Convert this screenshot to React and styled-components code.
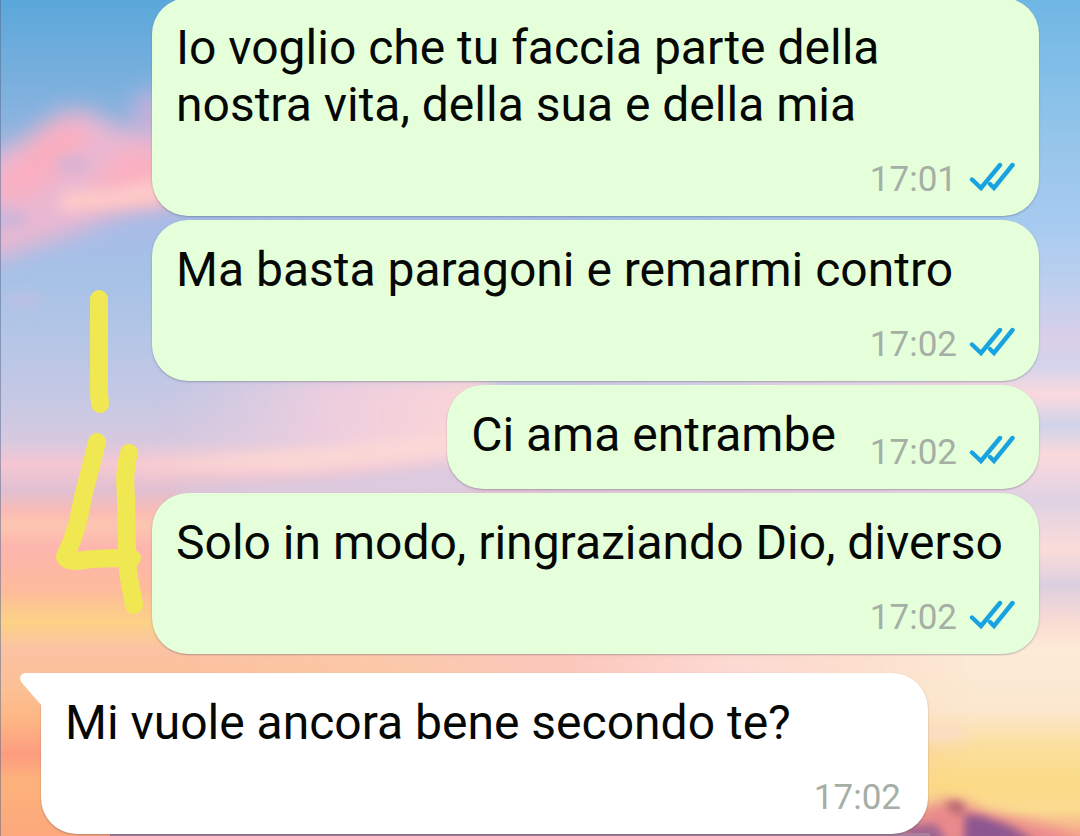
import React from "react";
import styled, { createGlobalStyle } from "styled-components";

const GlobalStyle = createGlobalStyle`
  * { box-sizing: border-box; }
  body { margin: 0; font-family: Roboto, "Noto Sans", sans-serif; }
`;

const Screen = styled.main`
  position: relative;
  height: 100vh;
  overflow: hidden;
  display: flex;
  flex-direction: column;
  justify-content: flex-end;
`;

const Sky = styled.svg`
  position: absolute;
  inset: 0;
  width: 100%;
  height: 100%;
`;

const Scribble = styled.svg`
  position: absolute;
  left: 50px;
  top: 285px;
  pointer-events: none;
`;

const Thread = styled.ol`
  position: relative;
  flex: none;
  list-style: none;
  margin: 0;
  padding: 0 41px 2px;
  display: flex;
  flex-direction: column;
  gap: 4px;
`;

const Bubble = styled.li`
  position: relative;
  display: flex;
  flex-direction: ${(p) => (p.$compact ? "row" : "column")};
  align-items: ${(p) => (p.$compact ? "flex-end" : "stretch")};
  align-self: ${(p) => (p.$incoming ? "flex-start" : "flex-end")};
  gap: ${(p) => (p.$compact ? "34px" : "26px")};
  width: ${(p) => (p.$compact ? "auto" : "calc(100% - 111px)")};
  margin-top: ${(p) => (p.$incoming ? "15px" : "0")};
  padding: 21px 24px 15px;
  border-radius: ${(p) => (p.$incoming ? "0 36px 36px 36px" : "36px")};
  background: ${(p) => (p.$incoming ? "#ffffff" : "#e5ffdb")};
  box-shadow: 0 1px 2px rgba(60, 60, 90, 0.35);
`;

const Message = styled.p`
  margin: 0;
  padding-bottom: ${(p) => (p.$compact ? "11px" : "0")};
  font-size: 48px;
  line-height: 57px;
  color: #050805;
`;

const Meta = styled.div`
  display: flex;
  justify-content: flex-end;
  align-items: center;
  padding-right: ${(p) => (p.$incoming ? "3px" : "0")};
  gap: 12px;
`;

const Time = styled.time`
  font-size: 35px;
  line-height: 42px;
  min-width: 87px;
  color: #a6afa5;
`;

const Tail = styled.svg`
  position: absolute;
  left: -21px;
  top: 0;
`;

function Ticks() {
  return (
    <svg width="46" height="38" viewBox="0 0 46 38" fill="none" stroke="#18a3e0" strokeWidth="4.4" role="img" aria-label="Letto">
      <path d="M3 18.5 L12 27 L31 4" strokeLinecap="round" />
      <path d="M21 23 L25 27 L43.5 4" strokeLinecap="round" />
    </svg>
  );
}

const leftSky = [
  [0, "#5aa7da"], [60, "#72aedd"], [110, "#85b2de"], [170, "#a2b8e0"], [230, "#a6bce7"],
  [280, "#a6c2e6"], [340, "#b5c6e6"], [400, "#c6c8e4"], [440, "#d6c9e0"], [465, "#f6c6d2"],
  [490, "#dfc0d2"], [512, "#fabbb4"], [525, "#fcc6b0"], [548, "#fdb5ae"], [590, "#fdbb9c"],
  [622, "#fcd286"], [650, "#fbc2a4"], [690, "#fcc094"], [720, "#fdb683"], [755, "#fd9c80"],
  [780, "#fdb27b"], [836, "#fca87c"],
];

const rightSky = [
  [0, "#70b6e4"], [80, "#84c0e8"], [150, "#98c6ea"], [230, "#a8cbf0"], [290, "#c0d0ee"],
  [340, "#dacfe8"], [365, "#d3d4ec"], [395, "#fbd9de"], [425, "#cfd3ea"], [455, "#fbd9dc"],
  [500, "#dfd2e4"], [550, "#fbdcd8"], [585, "#dccfe0"], [625, "#fbdcd2"], [650, "#fcebd6"],
  [710, "#fbe7d0"], [745, "#fbdf9e"], [785, "#fbdb86"], [810, "#fbdb90"], [836, "#f3a08c"],
];

function Stops({ list }) {
  return list.map(([y, color]) => <stop key={y} offset={y / 836} stopColor={color} />);
}

function SunsetSky() {
  return (
    <Sky viewBox="0 0 1080 836" preserveAspectRatio="none" aria-hidden="true">
      <defs>
        <linearGradient id="skyLeft" x1="0" y1="0" x2="0" y2="1"><Stops list={leftSky} /></linearGradient>
        <linearGradient id="skyRight" x1="0" y1="0" x2="0" y2="1"><Stops list={rightSky} /></linearGradient>
        <linearGradient id="fade" x1="0" y1="0" x2="1" y2="0">
          <stop offset="0.14" stopColor="#000" />
          <stop offset="0.55" stopColor="#555" />
          <stop offset="0.9" stopColor="#fff" />
        </linearGradient>
        <linearGradient id="haze" x1="0" y1="0" x2="1" y2="0">
          <stop offset="0" stopColor="#e6cedf" stopOpacity="0" />
          <stop offset="0.5" stopColor="#f1cedd" stopOpacity="0.9" />
          <stop offset="1" stopColor="#fdd6d6" />
        </linearGradient>
        <linearGradient id="glow" x1="0" y1="0" x2="1" y2="0">
          <stop offset="0" stopColor="#fbdcd0" stopOpacity="0" />
          <stop offset="0.5" stopColor="#fbd8d4" />
          <stop offset="1" stopColor="#fdd9d6" />
        </linearGradient>
        <linearGradient id="blush" x1="0" y1="0" x2="1" y2="0">
          <stop offset="0" stopColor="#fbc4bc" stopOpacity="0" />
          <stop offset="0.3" stopColor="#fbc6bc" />
          <stop offset="0.6" stopColor="#fddad4" />
          <stop offset="1" stopColor="#fddfd4" stopOpacity="0" />
        </linearGradient>
        <mask id="toRight"><rect width="1080" height="836" fill="url(#fade)" /></mask>
        <filter id="soft" x="-50%" y="-50%" width="200%" height="200%"><feGaussianBlur stdDeviation="11" /></filter>
        <filter id="medium" x="-50%" y="-50%" width="200%" height="200%"><feGaussianBlur stdDeviation="7" /></filter>
        <filter id="crisp" x="-50%" y="-50%" width="200%" height="200%"><feGaussianBlur stdDeviation="4" /></filter>
      </defs>
      <rect width="1080" height="836" fill="url(#skyLeft)" />
      <rect width="1080" height="836" fill="url(#skyRight)" mask="url(#toRight)" />
      <g filter="url(#soft)">
        <path d="M-20 160 L20 142 L60 112 L88 110 L115 126 L170 140 L180 205 L120 215 L60 238 L-20 264 Z" fill="#e9b7d2" />
        <path d="M-10 195 L10 165 L40 135 L70 118 L92 138 L70 165 L25 200 Z" fill="#fbaebf" />
        <path d="M95 180 L122 148 L180 155 L180 195 L90 200 Z" fill="#fab0c0" />
        <path d="M130 100 L170 86 L170 140 L138 130 Z" fill="#c4b0da" />
      </g>
      <g filter="url(#medium)">
        <path d="M-20 214 L20 210 L28 224 L-20 232 Z" fill="#c8b5dc" />
        <ellipse cx="72" cy="164" rx="18" ry="8" fill="#d4b2d4" />
        <path d="M58 196 Q80 188 108 190 L165 178 L165 202 L105 208 L62 212 Z" fill="#fecbc8" />
        <ellipse cx="24" cy="300" rx="22" ry="6" fill="#bfbfe2" />
      </g>
      <g filter="url(#soft)">
        <path d="M170 376 H490 V455 H170 Z" fill="url(#haze)" />
      </g>
      <g filter="url(#medium)">
        <path d="M90 460 L320 448 L480 430 L480 452 L300 470 L90 476 Z" fill="url(#glow)" />
        <path d="M180 490 L340 478 L470 460 L470 496 L180 500 Z" fill="#dccae0" />
        <path d="M380 650 H980 V680 H380 Z" fill="url(#blush)" />
        <ellipse cx="940" cy="734" rx="30" ry="7" fill="#fadcca" />
      </g>
      <g filter="url(#medium)">
        <path d="M915 810 L944 800 L964 802 L985 812 L1020 820 L1060 832 L1080 850 L900 850 Z" fill="#ea8a8c" />
      </g>
      <g filter="url(#crisp)">
        <path d="M965 814 L982 816 L1010 826 L1036 842 L964 846 Z" fill="#8d5790" />
        <path d="M905 826 L936 824 L948 842 L905 850 Z" fill="#a06593" />
        <path d="M944 804 L957 800 L966 808 L958 816 Z" fill="#b4636f" />
      </g>
      <path d="M110 833 H930 V850 H110 Z" fill="#a87f9c" />
      <rect width="1" height="836" fill="#53658a" opacity="0.5" />
    </Sky>
  );
}

const messages = [
  { text: "Io voglio che tu faccia parte della nostra vita, della sua e della mia", time: "17:01" },
  { text: "Ma basta paragoni e remarmi contro", time: "17:02" },
  { text: "Ci ama entrambe", time: "17:02", compact: true },
  { text: "Solo in modo, ringraziando Dio, diverso", time: "17:02" },
  { text: "Mi vuole ancora bene secondo te?", time: "17:02", incoming: true },
];

export default function App() {
  return (
    <Screen>
      <GlobalStyle />
      <SunsetSky />
      <Thread>
        {messages.map(({ text, time, compact, incoming }) => (
          <Bubble key={text} $compact={compact} $incoming={incoming}>
            {incoming && (
              <Tail width="22" height="34" viewBox="0 0 22 34" aria-hidden="true">
                <path d="M22 0 H6 C1 0 -2 5 2 10 L22 33 Z" fill="#fff" />
              </Tail>
            )}
            <Message $compact={compact}>{text}</Message>
            <Meta $incoming={incoming}>
              <Time>{time}</Time>
              {!incoming && <Ticks />}
            </Meta>
          </Bubble>
        ))}
      </Thread>
      <Scribble width="100" height="335" viewBox="50 285 100 335" fill="none" stroke="#efe853" strokeWidth="18" strokeLinecap="round" strokeLinejoin="round" aria-hidden="true">
        <path d="M99 299 V394 L100 404" />
        <path d="M97 442 C92 464 87 480 83 497 C79 518 76 534 65 557 C68 562 76 561 84 560 C100 558 118 558 132 558" />
        <path d="M129 453 C124 470 125 482 126 498 C127 530 126 560 129 578 L134 605" />
      </Scribble>
    </Screen>
  );
}
